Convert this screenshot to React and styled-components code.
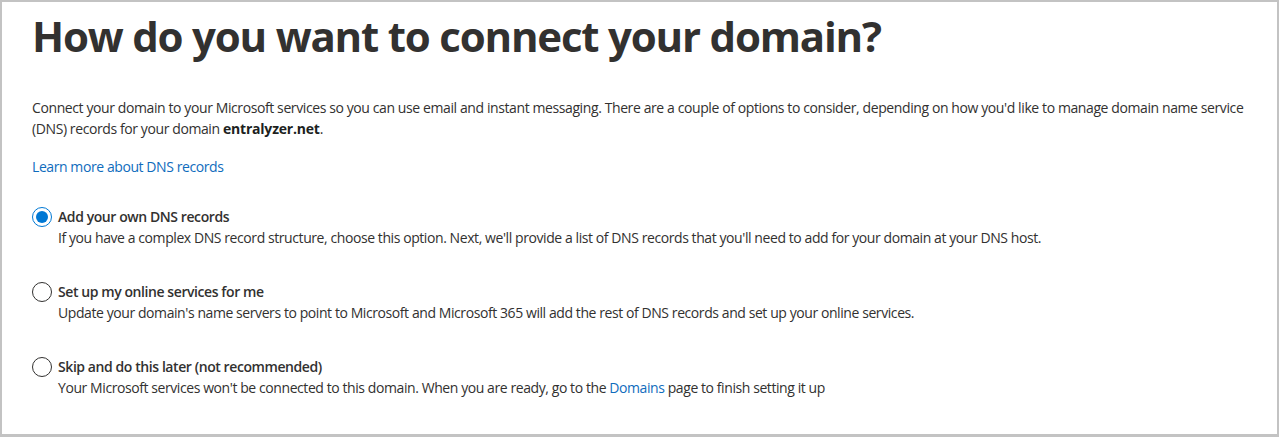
import React, { useState } from 'react';
import styled, { createGlobalStyle } from 'styled-components';

const GlobalStyle = createGlobalStyle`
	html, body {
		margin: 0;
		padding: 0;
		background: #ffffff;
	}
	body {
		font-family: 'Open Sans', 'Noto Sans', sans-serif;
		color: #323130;
	}
`;

const Frame = styled.div`
	box-sizing: border-box;
	width: 1279px;
	height: 437px;
	border: 2px solid #c3c3c3;
	border-bottom-width: 3px;
	padding: 8px 30px 0 30px;
	overflow: hidden;
`;

const Title = styled.h1`
	margin: 0;
	font-size: 42px;
	font-weight: 700;
	line-height: 52px;
	letter-spacing: -1.2px;
	color: #323130;
`;

const Intro = styled.p`
	margin: 35px 0 0 0;
	font-size: 14px;
	line-height: 21px;
	letter-spacing: -0.4px;
`;

const Domain = styled.b`
	font-weight: 700;
	letter-spacing: -0.2px;
	color: #201f1e;
`;

const Link = styled.a`
	color: #0f6cbd;
	text-decoration: none;
	cursor: pointer;
`;

const LearnMore = styled.div`
	margin-top: 17px;
	font-size: 14px;
	line-height: 21px;
	letter-spacing: -0.42px;
`;

const Options = styled.div`
	display: flex;
	flex-direction: column;
	gap: 33px;
	margin-top: 29px;
`;

const Option = styled.label`
	display: grid;
	grid-template-columns: 20px 1fr;
	column-gap: 6px;
	cursor: pointer;
`;

const Radio = styled.span`
	box-sizing: border-box;
	width: 20px;
	height: 20px;
	margin-top: 1px;
	border-radius: 50%;
	border: 1px solid ${p => (p.$checked ? '#0078d4' : '#323130')};
	display: flex;
	align-items: center;
	justify-content: center;

	&::after {
		content: '';
		width: 12px;
		height: 12px;
		border-radius: 50%;
		background: #0078d4;
		display: ${p => (p.$checked ? 'block' : 'none')};
	}
`;

const OptionText = styled.div`
	font-size: 14px;
	line-height: 21px;
	letter-spacing: -0.42px;
`;

const OptionTitle = styled.div`
	font-weight: 600;
	color: #323130;
`;

const OptionDesc = styled.div`
	font-weight: 400;
`;

const options = [
	{
		id: 'own',
		title: 'Add your own DNS records',
		desc: "If you have a complex DNS record structure, choose this option. Next, we'll provide a list of DNS records that you'll need to add for your domain at your DNS host.",
	},
	{
		id: 'managed',
		title: 'Set up my online services for me',
		desc: "Update your domain's name servers to point to Microsoft and Microsoft 365 will add the rest of DNS records and set up your online services.",
	},
	{
		id: 'later',
		title: 'Skip and do this later (not recommended)',
		desc: (
			<>
				Your Microsoft services won't be connected to this domain. When you are ready, go to the <Link>Domains</Link> page to finish setting it up
			</>
		),
	},
];

const App = () => {
	const [selected, setSelected] = useState('own');

	return (
		<>
			<GlobalStyle />
			<Frame>
				<Title>How do you want to connect your domain?</Title>
				<Intro>
					Connect your domain to your Microsoft services so you can use email and instant messaging. There are a couple of options to consider, depending on how you'd like to manage domain name service (DNS) records for your domain <Domain>entralyzer.net</Domain>.
				</Intro>
				<LearnMore>
					<Link>Learn more about DNS records</Link>
				</LearnMore>
				<Options>
					{options.map(o => (
						<Option key={o.id} onClick={() => setSelected(o.id)}>
							<Radio $checked={selected === o.id} />
							<OptionText>
								<OptionTitle>{o.title}</OptionTitle>
								<OptionDesc>{o.desc}</OptionDesc>
							</OptionText>
						</Option>
					))}
				</Options>
			</Frame>
		</>
	);
};

export default App;
